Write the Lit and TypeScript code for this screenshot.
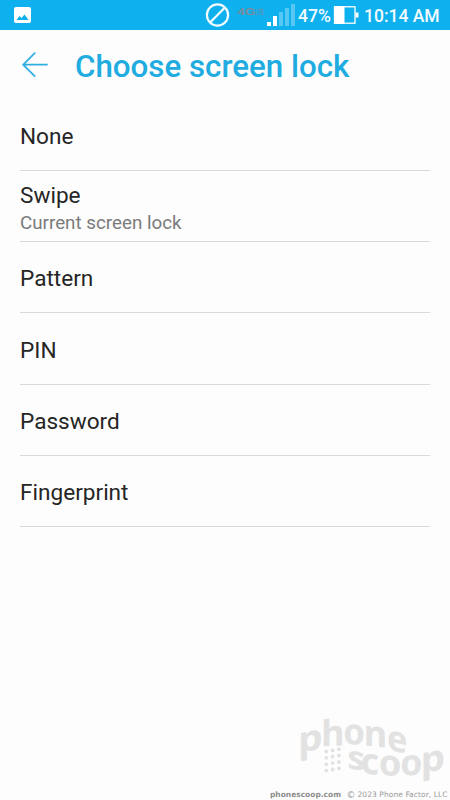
import { LitElement, html, css, svg } from "lit";
import { customElement } from "lit/decorators.js";
import { classMap } from "lit/directives/class-map.js";

interface LockOption {
  label: string;
  note?: string;
}

interface Glyph {
  ch: string;
  x: number;
  y: number;
  slope: number;
  width: number;
}

const OPTIONS: LockOption[] = [
  { label: "None" },
  { label: "Swipe", note: "Current screen lock" },
  { label: "Pattern" },
  { label: "PIN" },
  { label: "Password" },
  { label: "Fingerprint" },
];

// Letters of the wavy wordmark: baseline origin, slope of the wave there, and relative width.
const MARK: Glyph[] = [
  { ch: "p", x: 298.2, y: 753.2, slope: -11, width: 1.07 },
  { ch: "h", x: 321.2, y: 746.5, slope: -3, width: 0.99 },
  { ch: "o", x: 343.3, y: 744.3, slope: 1, width: 0.97 },
  { ch: "n", x: 363.7, y: 745.2, slope: 6, width: 1 },
  { ch: "e", x: 387, y: 749.5, slope: 12, width: 0.95 },
  { ch: "s", x: 347.3, y: 768, slope: 10, width: 1.1 },
  { ch: "c", x: 360.5, y: 773, slope: 6, width: 1 },
  { ch: "o", x: 378.7, y: 775, slope: 3, width: 1.01 },
  { ch: "o", x: 400.3, y: 775.8, slope: -3, width: 0.99 },
  { ch: "p", x: 420.8, y: 773.2, slope: -10, width: 1.07 },
];

@customElement("status-bar")
export class StatusBar extends LitElement {
  static styles = css`
    :host { display: block; }
    .bar {
      display: flex;
      height: 30px;
      background: #0eb0ee;
      color: #f2fbff;
      font: 500 17.5px/30px Roboto, sans-serif;
    }
    svg { display: block; flex: none; }
    .pct { width: 34px; margin-left: 2px; white-space: nowrap; padding-top: 1px; box-sizing: border-box; }
    .time { margin-left: 5px; white-space: nowrap; padding-top: 1px; }
    .net { font: 700 10px "Liberation Sans", sans-serif; fill: #7c8a9a; text-rendering: geometricPrecision; }
    .lte { font-size: 9px; opacity: .7; }
  `;
  render() {
    return html`<div class="bar">
      <svg width="296" height="30" viewBox="0 0 296 30">
        <path fill="#fff" fill-rule="evenodd" d="M16 7h13q2 0 2 2v12q0 2-2 2h-13q-2 0-2-2v-12q0-2 2-2zM16.500 20h12l-4-5.500-3 3.500-2-2z" />
        <g fill="none" stroke="#f4fcff" stroke-width="2.200">
          <circle cx="217.500" cy="15" r="10.600" />
          <path d="M210.300 22.200L224.700 7.800" />
        </g>
        <text class="net" transform="translate(237.500 14.500) scale(1.350 1)">4G</text>
        <text class="net lte" transform="translate(255.500 14.500) scale(.52 1)">LTE</text>
        <g fill="#fff">
          <rect x="267" y="22" width="4" height="4" />
          <rect x="273" y="16" width="4" height="10" />
          <rect x="279" y="12" width="4" height="14" opacity=".3" />
          <rect x="285" y="8" width="4" height="18" opacity=".3" />
          <rect x="291" y="4" width="4" height="22" opacity=".3" />
        </g>
      </svg>
      <span class="pct">47%</span>
      <svg width="27" height="30" viewBox="332 0 27 30">
        <rect x="334.500" y="6.800" width="20.500" height="16.400" fill="none" stroke="#fff" stroke-width="1.300" />
        <rect x="334" y="6" width="10.500" height="18" fill="#fff" />
        <rect x="355.500" y="12.500" width="3" height="5" fill="#fff" />
      </svg>
      <span class="time">10:14 AM</span>
    </div>`;
  }
}

@customElement("scoop-credit")
export class ScoopCredit extends LitElement {
  static styles = css`
    :host { display: block; }
    svg { display: block; }
    .mark { font: 700 36px "Noto Sans", sans-serif; fill: #e2e2e2; text-rendering: geometricPrecision; }
    .small { font-size: 32.500px; }
    .site { font: 700 7.500px "DejaVu Sans", sans-serif; fill: #8d8d8d; }
    .legal { font: 400 7.500px "DejaVu Sans", sans-serif; fill: #999; }
    .sign { font-size: 9px; }
  `;
  render() {
    const dots = [0, 1, 2, 3].flatMap((r) =>
      [0, 1, 2].map((c) => svg`<circle cx=${326.3 + c * 6.3} cy=${751.4 + r * 6.4 - c * 1.1} r="1.900" fill="#e2e2e2" />`),
    );
    return html`<svg width="190" height="100" viewBox="260 700 190 100">
      ${MARK.map((g) => svg`<text class=${classMap({ mark: true, small: g.ch === "s" })} transform=${`translate(${g.x} ${g.y}) skewY(${g.slope}) scale(${g.width} 1)`}>${g.ch}</text>`)}
      ${dots}
      <text class="site" x="270" y="797" textLength="71">phonescoop.com</text>
      <text class="legal sign" x="346.500" y="797.500">©</text>
      <text class="legal" x="357.500" y="797" textLength="90">2023 Phone Factor, LLC</text>
    </svg>`;
  }
}

@customElement("app-root")
export class AppRoot extends LitElement {
  static styles = css`
    :host {
      display: flex;
      flex-direction: column;
      width: 450px;
      height: 800px;
      overflow: hidden;
      background: #fdfdfd;
      font-family: Roboto, sans-serif;
    }
    header { display: flex; height: 69.700px; flex: none; }
    header svg { display: block; width: 75px; flex: none; }
    h1 {
      margin: 0;
      font-size: 31.300px;
      font-weight: 500;
      line-height: 74px;
      color: #20ace0;
      white-space: nowrap;
    }
    ul { list-style: none; margin: 0; padding: 0 20px; }
    li {
      box-sizing: border-box;
      height: 71.250px;
      padding-top: 4.300px;
      border-bottom: 1px solid #dadada;
      display: flex;
      flex-direction: column;
      justify-content: center;
      color: #252525;
    }
    .noted { padding-top: 6.500px; }
    .label { font-size: 22.600px; line-height: 28px; }
    .note { font-size: 18.800px; line-height: 27px; color: #7b7b7b; }
    scoop-credit { margin-top: auto; align-self: flex-end; }
  `;
  render() {
    return html`
      <status-bar></status-bar>
      <header>
        <svg width="75" height="70" viewBox="0 30 75 70" fill="none" stroke="#30aedf" stroke-width="1.800">
          <path d="M47.700 64.700H23.500M35.200 52.700L23.200 64.700L35.200 76.700" />
        </svg>
        <h1>Choose screen lock</h1>
      </header>
      <ul>
        ${OPTIONS.map((o) => html`<li class=${classMap({ noted: !!o.note })}>
          <span class="label">${o.label}</span>
          ${o.note ? html`<span class="note">${o.note}</span>` : null}
        </li>`)}
      </ul>
      <scoop-credit></scoop-credit>
    `;
  }
}
